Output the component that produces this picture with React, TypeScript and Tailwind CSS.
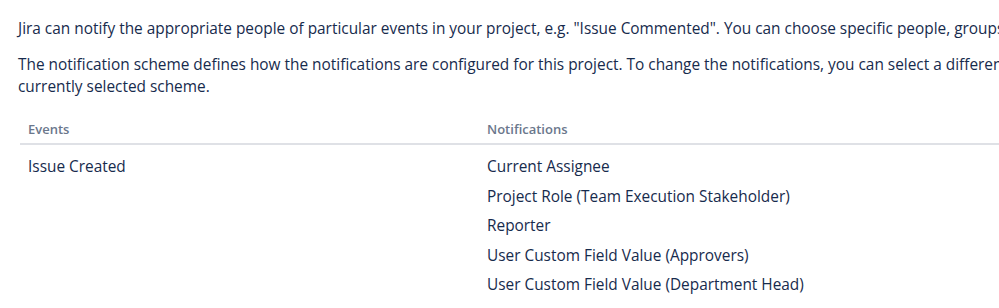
const notifications = [
  'Current Assignee',
  'Project Role (Team Execution Stakeholder)',
  'Reporter',
  'User Custom Field Value (Approvers)',
  'User Custom Field Value (Department Head)',
];

export default function App() {
  return (
    <div className="h-[308px] w-[999px] overflow-hidden bg-white font-['Open_Sans',sans-serif] text-[#172b4d]">
      <div className="w-[1400px] px-[18px] pt-[18px]">
        <p className="whitespace-nowrap text-[15.4px] leading-[22px]">
          Jira can notify the appropriate people of particular events in your project, e.g. "Issue Commented". You can
          choose specific people, groups, or roles to receive notifications.
        </p>
        <p className="mt-[14px] text-[15.4px] leading-[22px]">
          <span className="whitespace-nowrap">
            The notification scheme defines how the notifications are configured for this project. To change the
            notifications, you can select a different notification scheme or modify the
          </span>
          <br />
          currently selected scheme.
        </p>

        {/* Events / notifications table */}
        <table className="ml-[2px] mt-[17px] w-[1200px] border-collapse text-left">
          <thead>
            <tr className="border-b-2 border-[#dfe1e6]">
              <th className="w-[459px] px-2 py-1 text-[13px] font-semibold leading-5 text-[#6b778c]">Events</th>
              <th className="px-2 py-1 text-[13px] font-semibold leading-5 text-[#6b778c]">Notifications</th>
            </tr>
          </thead>
          <tbody>
            <tr>
              <td className="px-2 pt-[7px] align-top text-[15.4px] leading-[29.5px]">Issue Created</td>
              <td className="px-2 pt-[7px] align-top text-[15.4px] leading-[29.5px]">
                <ul>
                  {notifications.map((n) => (
                    <li key={n}>{n}</li>
                  ))}
                </ul>
              </td>
            </tr>
          </tbody>
        </table>
      </div>
    </div>
  );
}
